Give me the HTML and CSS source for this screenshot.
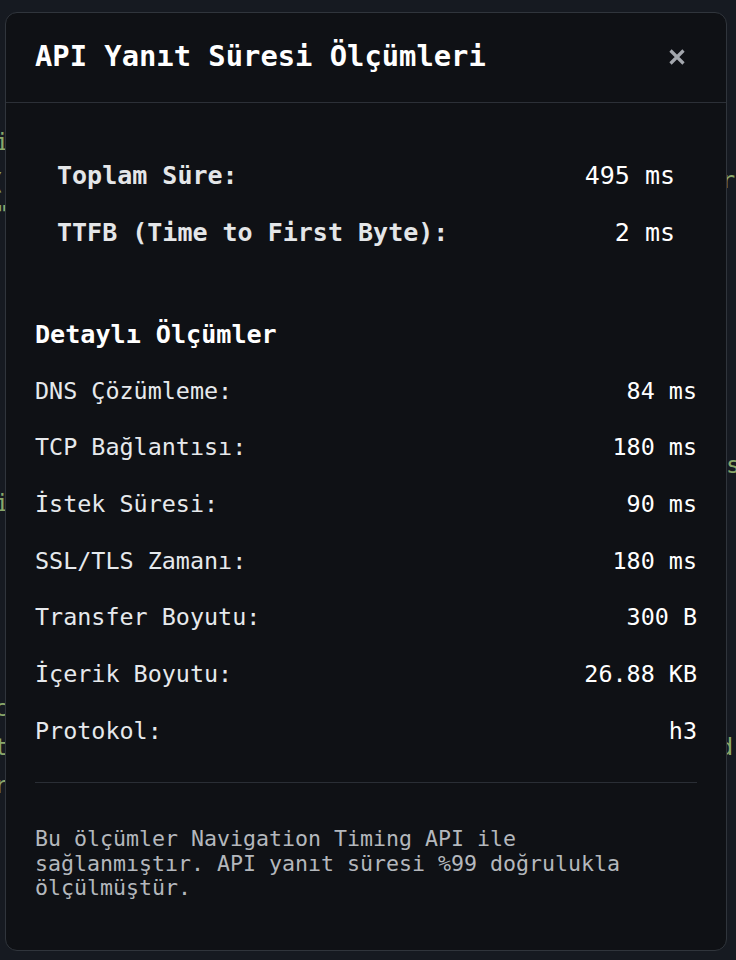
FILE: index.html
```html
<!DOCTYPE html>
<html lang="tr">
<head>
<meta charset="utf-8">
<title>API Yanıt Süresi Ölçümleri</title>
<link rel="stylesheet" href="styles.css">
</head>
<body>
<div class="code-bg" aria-hidden="true">
  <span class="g" style="left:-5px;top:128px">i</span>
  <span class="g" style="left:-9px;top:168px">(</span>
  <span class="g" style="left:-5px;top:200px">"</span>
  <span class="g" style="left:-5px;top:489px">i</span>
  <span class="g" style="left:-6px;top:694px">c</span>
  <span class="g" style="left:-6px;top:733px">t</span>
  <span class="g" style="left:-6px;top:771px">r</span>
  <span class="g" style="left:721px;top:166px">r</span>
  <span class="g" style="left:726px;top:451px">s</span>
  <span class="g" style="left:719px;top:733px">d</span>
</div>

<div class="modal">
  <div class="modal-header">
    <h2 class="modal-title">API Yanıt Süresi Ölçümleri</h2>
    <button class="close-btn" aria-label="Kapat">
      <svg width="16" height="16" viewBox="0 0 16 16"><path d="M1.5 1.5 L14.5 14.5 M14.5 1.5 L1.5 14.5" stroke="#a3a7ad" stroke-width="3.2" fill="none"/></svg>
    </button>
  </div>
  <div class="modal-body">
    <div class="summary">
      <div class="row"><span class="label strong">Toplam Süre:</span><span class="value">495 ms</span></div>
      <div class="row"><span class="label strong">TTFB (Time to First Byte):</span><span class="value">2 ms</span></div>
    </div>
    <h3 class="section-title">Detaylı Ölçümler</h3>
    <div class="details">
      <div class="drow"><span>DNS Çözümleme:</span><span class="value">84 ms</span></div>
      <div class="drow"><span>TCP Bağlantısı:</span><span class="value">180 ms</span></div>
      <div class="drow"><span>İstek Süresi:</span><span class="value">90 ms</span></div>
      <div class="drow"><span>SSL/TLS Zamanı:</span><span class="value">180 ms</span></div>
      <div class="drow"><span>Transfer Boyutu:</span><span class="value">300 B</span></div>
      <div class="drow"><span>İçerik Boyutu:</span><span class="value">26.88 KB</span></div>
      <div class="drow"><span>Protokol:</span><span class="value">h3</span></div>
    </div>
    <div class="divider"></div>
    <p class="note">Bu ölçümler Navigation Timing API ile<br>sağlanmıştır. API yanıt süresi %99 doğrulukla<br>ölçülmüştür.</p>
  </div>
</div>
</body>
</html>
```
FILE: styles.css
```css
html, body {
  margin: 0;
  padding: 0;
}
body {
  width: 736px;
  height: 960px;
  background: #161a21;
  font-family: "DejaVu Sans Mono", monospace;
  color: #e6edf3;
  position: relative;
  overflow: hidden;
}
.code-bg {
  position: absolute;
  inset: 0;
  overflow: hidden;
}
.g {
  position: absolute;
  font-family: "DejaVu Sans Mono", monospace;
  font-size: 23.6px;
  line-height: 28px;
  color: #8aa86a;
}
.modal {
  position: absolute;
  left: 5px;
  top: 12px;
  width: 722px;
  height: 939px;
  box-sizing: border-box;
  background: #0f1115;
  border: 1px solid #30353c;
  border-radius: 12px;
}
.modal-header {
  height: 89px;
  box-sizing: content-box;
  border-bottom: 1px solid #2c3037;
  display: flex;
  align-items: center;
  justify-content: space-between;
  padding: 0 41px 0 29px;
}
.modal-title {
  margin: 0 0 3px 0;
  font-size: 28.8px;
  font-weight: bold;
  color: #ffffff;
  line-height: 34px;
}
.close-btn {
  background: none;
  border: 0;
  padding: 0;
  width: 16px;
  height: 16px;
  display: block;
  margin-bottom: 2px;
}
.close-btn svg {
  display: block;
}
.modal-body {
  padding: 0 29px 0 29px;
}
.summary {
  margin-top: 43.5px;
  padding: 0 22px;
}
.row {
  display: flex;
  justify-content: space-between;
  font-size: 25px;
  line-height: 29px;
  padding: 14px 0;
}
.label.strong {
  font-weight: bold;
  color: #e4e6e8;
}
.row .value {
  color: #ffffff;
}
.section-title {
  margin: 59px 0 0 0;
  font-size: 25.1px;
  line-height: 30px;
  font-weight: bold;
  color: #ffffff;
}
.details {
  margin-top: 13px;
}
.drow {
  display: flex;
  justify-content: space-between;
  font-size: 23.4px;
  line-height: 28px;
  padding: 14.33px 0;
  color: #e6e9ec;
}
.drow .value {
  color: #ffffff;
}
.divider {
  margin-top: 22.67px;
  height: 1px;
  background: #2a2e35;
}
.note {
  margin: 44.5px 0 0 0;
  font-size: 21.6px;
  line-height: 24.5px;
  color: #b4b8bd;
}
```
